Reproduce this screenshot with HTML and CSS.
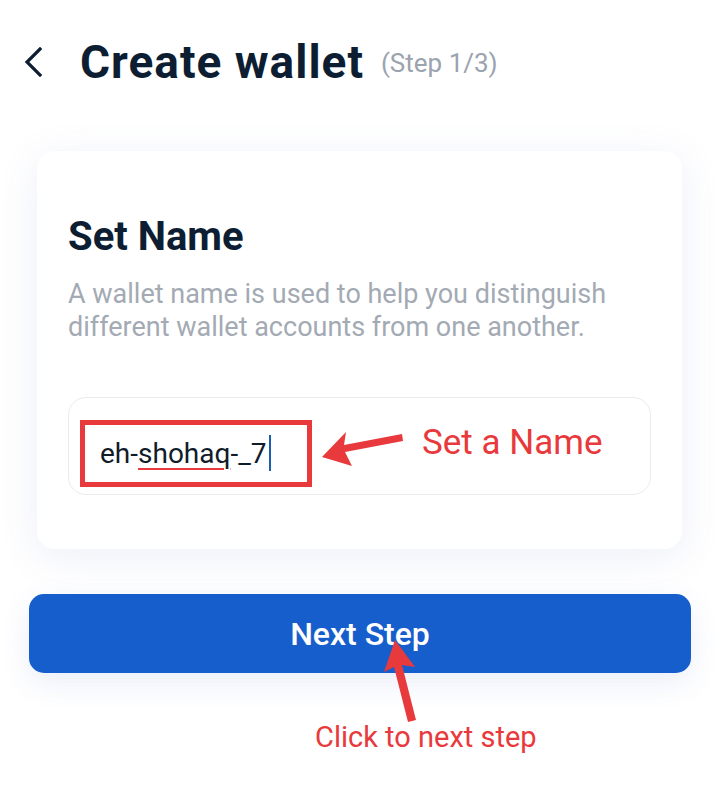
FILE: index.html
```html
<!DOCTYPE html>
<html>
<head>
<meta charset="utf-8">
<link rel="stylesheet" href="styles.css">
</head>
<body>
<div class="page">
  <header class="header">
    <svg class="back" width="22" height="30" viewBox="0 0 22 30"><path d="M18 2 L5 15 L18 28" fill="none" stroke="#0d1e33" stroke-width="3.2" stroke-linecap="square"/></svg>
    <h1 class="title">Create wallet</h1>
    <span class="step">(Step 1/3)</span>
  </header>

  <section class="card">
    <h2 class="card-title">Set Name</h2>
    <p class="desc">A wallet name is used to help you distinguish different wallet accounts from one another.</p>
    <div class="field">
      <div class="mark-box">
        <span class="value">eh-<span class="spell">shohaq</span>-_7</span><span class="caret"></span>
      </div>
      <svg class="arrow-left" width="82" height="46" viewBox="0 0 82 46"><polygon points="0,33 24,8 22,21 80,10 81,17 23,28 30,42" fill="#e8393c"/></svg>
      <span class="note note-name">Set a Name</span>
    </div>
  </section>

  <div class="action">
    <button class="btn">Next Step</button>
    <svg class="arrow-up" width="50" height="90" viewBox="0 0 50 90"><polygon points="11,0 0,32 10,27 24,82 32,80 18,25 31,27" fill="#e8393c"/></svg>
    <p class="note note-click">Click to next step</p>
  </div>
</div>
</body>
</html>
```

FILE: styles.css
```css
* { box-sizing: border-box; }
html, body { margin: 0; padding: 0; background: #fff; }
body { font-family: Roboto, "Noto Sans", sans-serif; width: 719px; height: 791px; overflow: hidden; }
.page { display: flex; flex-direction: column; }

.header { display: flex; align-items: center; padding: 32px 0 0 22px; height: 92px; }
.back { margin-right: 36px; flex: none; }
.title { margin: 0; font-size: 46px; font-weight: 700; color: #0d1e33; letter-spacing: 1px; line-height: 52px; }
.step { margin-left: 17px; font-size: 26px; color: #9aa3ae; line-height: 52px; margin-top: 2px; }

.card {
  margin: 59px 0 0 37px; width: 645px; height: 398px;
  background: #fff; border-radius: 18px;
  box-shadow: 0 8px 40px rgba(80, 100, 190, 0.10);
  padding: 62px 31px 0 31px;
}
.card-title { margin: 0; font-size: 40px; font-weight: 700; color: #0d1e33; line-height: 48px; }
.desc { margin: 17px 0 0 0; font-size: 27px; line-height: 33px; color: #a3aab3; font-weight: 400; }

.field {
  position: relative; margin-top: 53px; height: 98px;
  border: 1.5px solid #e9ebef; border-radius: 18px;
  display: flex; align-items: center; padding-left: 11px;
}
.mark-box {
  width: 232px; height: 67px; border: 5px solid #e8393c; margin-top: 14px;
  display: flex; align-items: center; padding-left: 15px;
}
.value { font-size: 28px; color: #111c2a; }
.spell { text-decoration: underline; text-decoration-color: #e8393c; text-decoration-thickness: 2px; text-underline-offset: 5px; }
.caret { width: 2px; height: 36px; background: #1c5fb0; margin-left: 2px; }
.arrow-left { position: absolute; left: 253px; top: 26px; }
.note { color: #e8393c; font-family: Roboto, sans-serif; }
.note-name { position: absolute; left: 353px; top: 24px; font-size: 35px; }

.action { position: relative; margin-top: 45px; padding-left: 29px; }
.btn {
  width: 662px; height: 79px; border: 0; border-radius: 15px;
  background: #165ecb; color: #fff; font-family: Roboto, sans-serif;
  font-size: 32px; font-weight: 500;
  box-shadow: 0 10px 30px rgba(60, 90, 200, 0.10);
}
.arrow-up { position: absolute; left: 384px; top: 46px; }
.note-click { position: absolute; left: 315px; top: 126px; margin: 0; font-size: 29px; }
```
